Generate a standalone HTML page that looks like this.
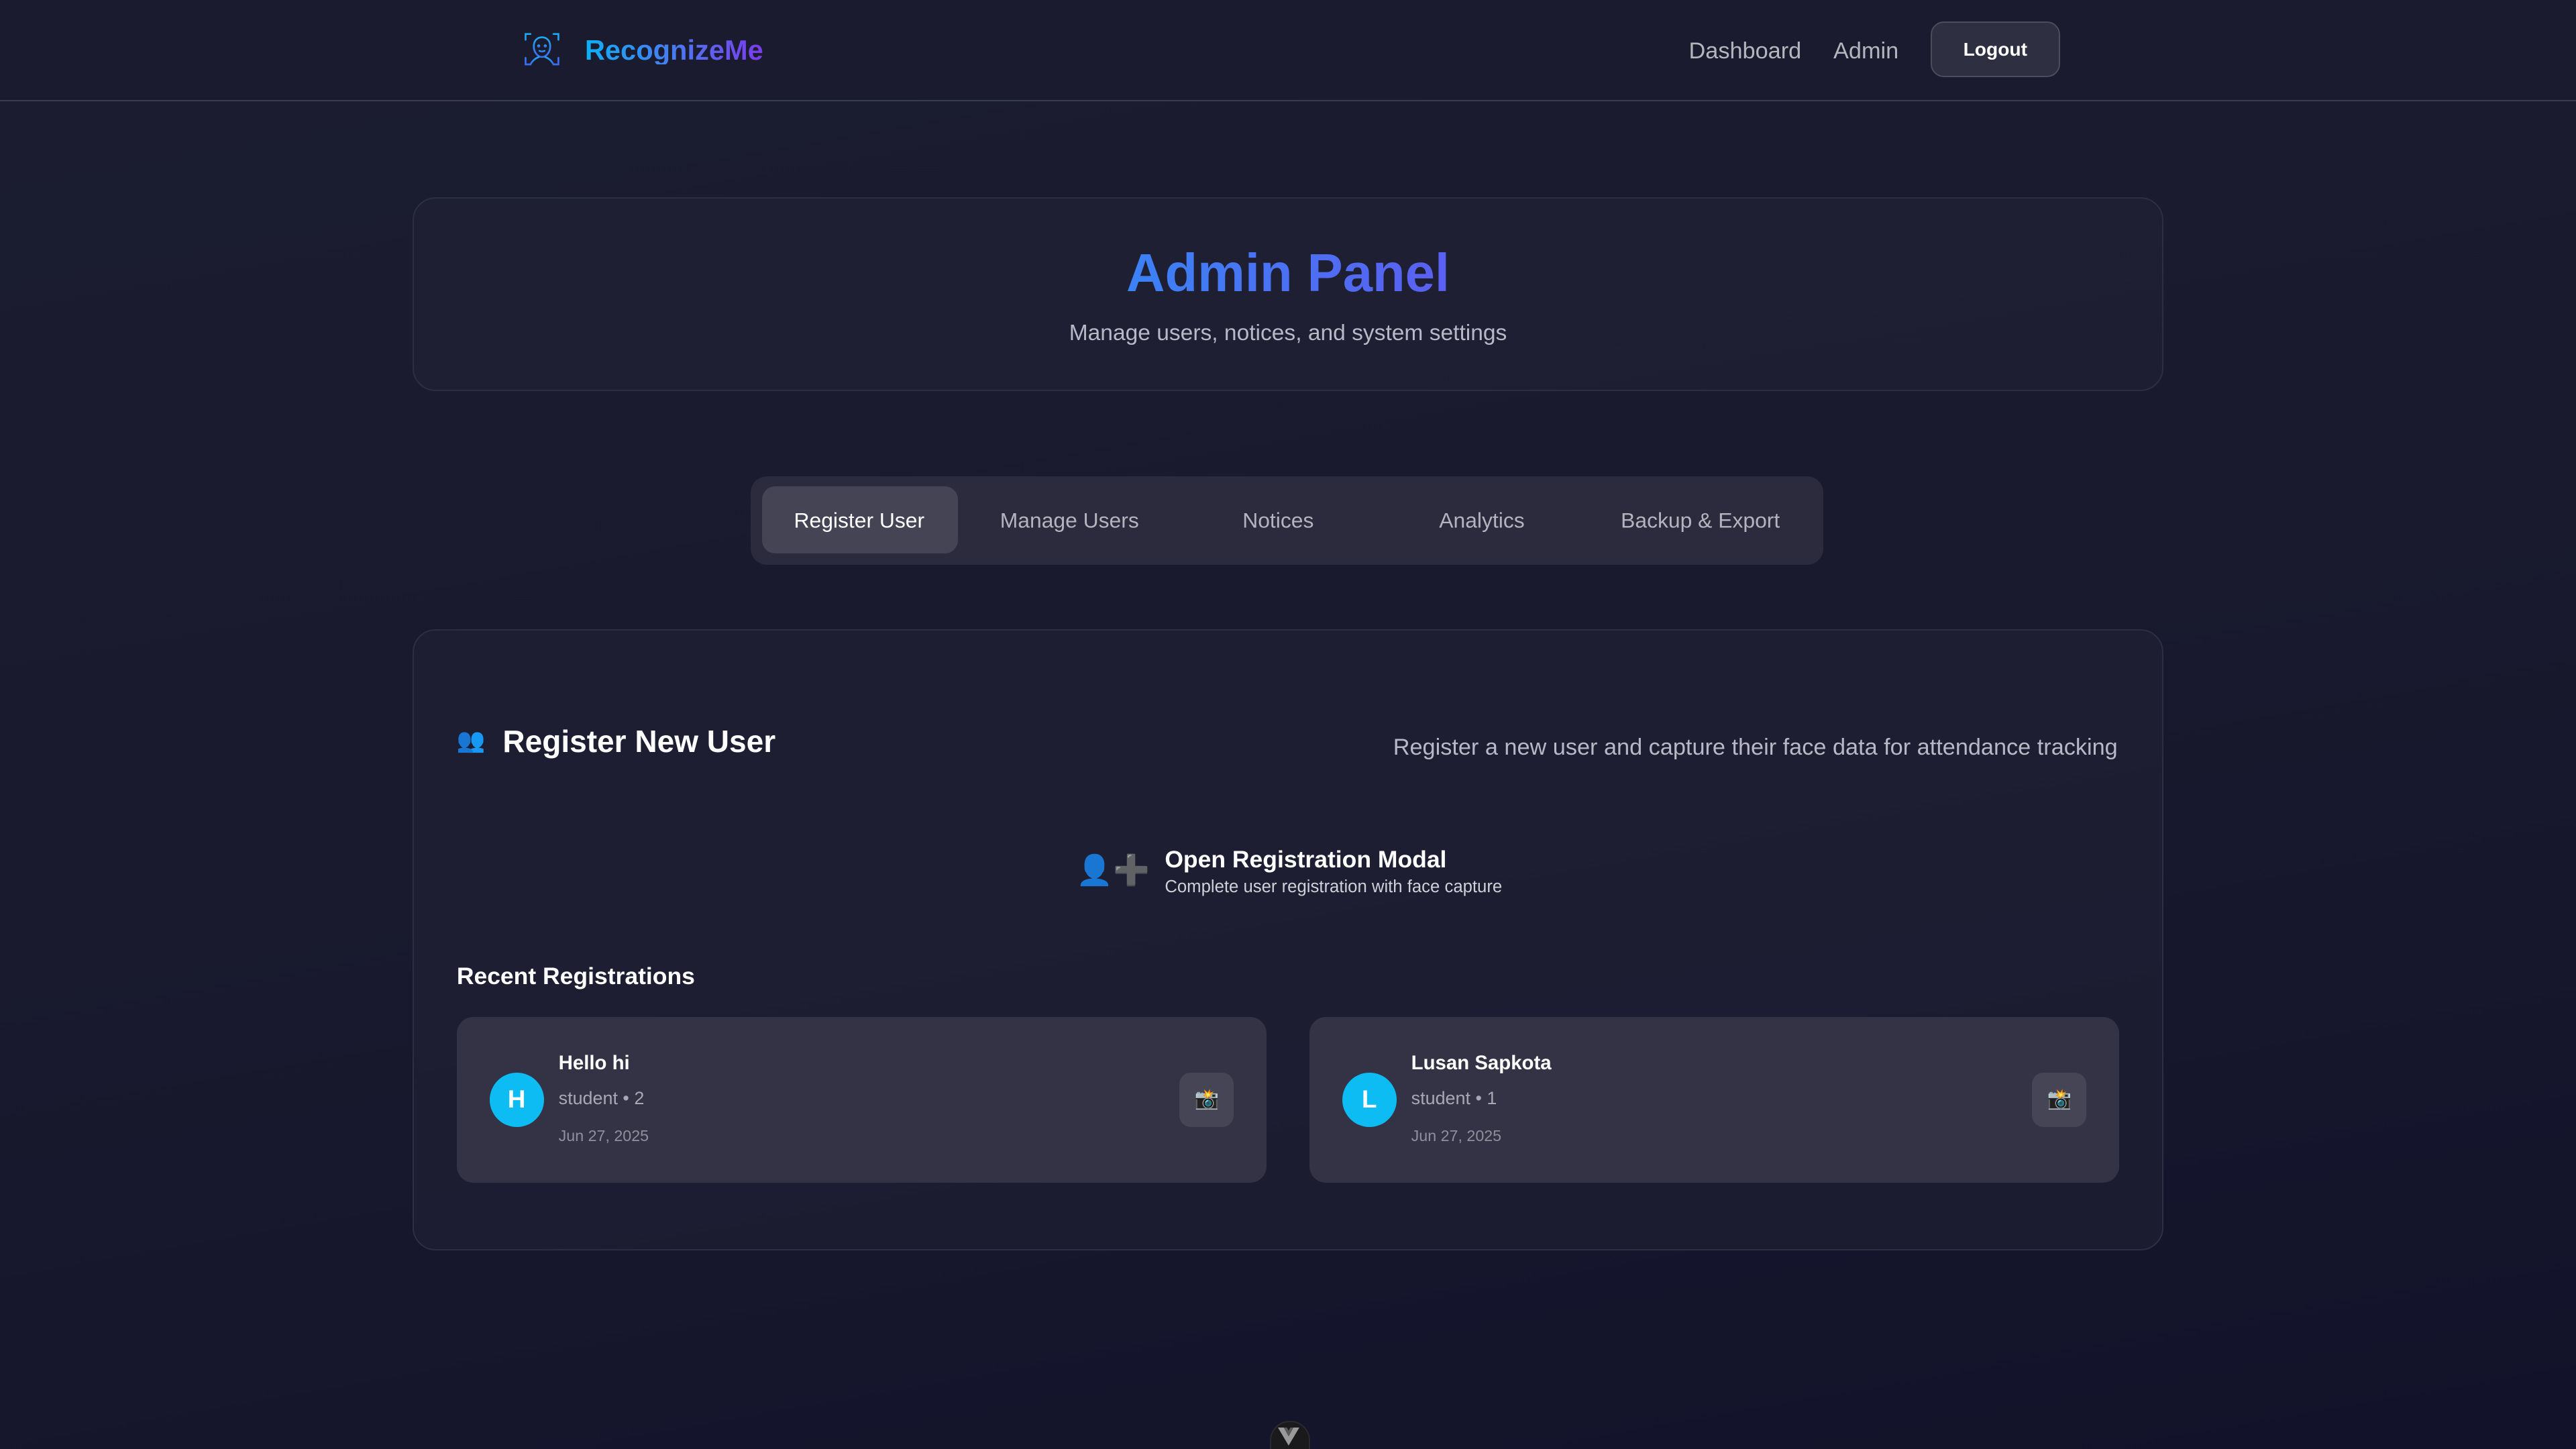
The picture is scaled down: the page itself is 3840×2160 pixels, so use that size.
<!DOCTYPE html>
<html><head><meta charset="utf-8"><style>
html,body{margin:0;padding:0;width:3840px;height:2160px;overflow:hidden;background:#161729}
#w{zoom:2.44898;width:1568px;height:882px;position:relative;background:linear-gradient(170deg,#1b1c30 0%,#191a2e 50%,#12122a 100%);font-family:"Liberation Sans","DejaVu Sans",sans-serif;color:#fff}
.a{position:absolute}
.c{position:absolute;line-height:1;white-space:nowrap}
.card{position:absolute;background:rgba(34,35,54,0.55);border:1px solid #2d2e44;border-radius:14px;box-sizing:border-box}
.rc{position:absolute;background:#333345;border-radius:10px;width:493px;height:101px;top:619px}
.av{position:absolute;left:20px;top:34px;width:33px;height:33px;border-radius:50%;background:#0ebcf4;font-size:15px;line-height:33px;text-align:center;font-weight:bold}
.cam{position:absolute;left:440px;top:34px;width:33px;height:33px;border-radius:7px;background:#454556;font-size:12px;line-height:33px;text-align:center}
.tab{position:absolute;top:317px;transform:translate(-50%,-50%);font-size:13px;color:#b4b4bf;white-space:nowrap}
</style></head><body><div id="w">
<div class="a" style="left:0;top:0;width:1568px;height:61px;background:#1a1b2e;border-bottom:1px solid #3a3b4e"></div>
<svg class="a" style="left:319px;top:19px" width="22" height="22" viewBox="0 0 22 22" fill="none" stroke-width="1.1" stroke-linecap="round">
<defs><linearGradient id="g" x1="0" y1="0" x2="0" y2="1"><stop offset="0" stop-color="#1ea8f0"/><stop offset="1" stop-color="#3b6cf0"/></linearGradient></defs>
<g stroke="url(#g)"><path d="M1 5V1.5h3M21 5V1.5h-3M1 16v4h3M21 16v4h-3"/><path d="M11 3.5c-3 0-5 2.2-5 5.5 0 3.5 2.3 6.5 5 6.5s5-3 5-6.5c0-3.3-2-5.5-5-5.5z"/><path d="M4 20c1-2 2.5-3.5 5-4.5M18 20c-1-2-2.5-3.5-5-4.5"/><circle cx="9" cy="8.8" r=".4"/><circle cx="13" cy="8.8" r=".4"/><path d="M9.5 11.8c1 .5 2 .5 3 0"/></g></svg>
<div class="c" style="left:356px;top:22px;font-size:17px;font-weight:bold;background:linear-gradient(90deg,#0db0f5,#4a7af0 50%,#7c3aed);-webkit-background-clip:text;background-clip:text;color:transparent">RecognizeMe</div>
<div class="c" style="left:1028px;top:24px;font-size:14px;color:#b5b5bd">Dashboard</div>
<div class="c" style="left:1116px;top:24px;font-size:14px;color:#b5b5bd">Admin</div>
<div class="a" style="left:1175px;top:13px;width:79px;height:34px;box-sizing:border-box;border:1px solid #4c4c5c;border-radius:8px;background:#2f2f42;font-size:11.5px;font-weight:bold;text-align:center;line-height:33px">Logout</div>

<div class="card" style="left:251px;top:120px;width:1066px;height:118px"></div>
<div class="c" style="left:0;width:1568px;text-align:center;top:150px;font-size:32.5px;font-weight:bold"><span style="background:linear-gradient(90deg,#3b82f6,#5b5ff0);-webkit-background-clip:text;background-clip:text;color:transparent">Admin Panel</span></div>
<div class="c" style="left:0;width:1568px;text-align:center;top:196px;font-size:13.7px;color:#b8b8c6">Manage users, notices, and system settings</div>

<div class="a" style="left:457px;top:290px;width:653px;height:54px;border-radius:10px;background:#2b2b3d"></div>
<div class="a" style="left:464px;top:296px;width:119px;height:41px;border-radius:8px;background:#444455"></div>
<div class="tab" style="left:523px;color:#fff">Register User</div>
<div class="tab" style="left:651px">Manage Users</div>
<div class="tab" style="left:778px">Notices</div>
<div class="tab" style="left:902px">Analytics</div>
<div class="tab" style="left:1035px">Backup &amp; Export</div>

<div class="card" style="left:251px;top:383px;width:1066px;height:378px"></div>
<div class="c" style="left:278px;top:444px;font-size:14px">👥</div>
<div class="c" style="left:306px;top:442px;font-size:18.8px;font-weight:600">Register New User</div>
<div class="c" style="right:279px;top:448px;font-size:14px;color:#b8b8c6">Register a new user and capture their face data for attendance tracking</div>
<div class="c" style="left:655px;top:521px;font-size:18px">👤➕</div>
<div class="c" style="left:709px;top:516px;font-size:14.5px;font-weight:bold">Open Registration Modal</div>
<div class="c" style="left:709px;top:535px;font-size:10.5px;color:#d0d0d8">Complete user registration with face capture</div>
<div class="c" style="left:278px;top:587px;font-size:14.5px;font-weight:bold">Recent Registrations</div>

<div class="rc" style="left:278px"><div class="av">H</div>
<div class="c" style="left:62px;top:22px;font-size:12px;font-weight:bold">Hello hi</div>
<div class="c" style="left:62px;top:44px;font-size:11px;color:#a8a8b4">student • 2</div>
<div class="c" style="left:62px;top:68px;font-size:9.5px;color:#8f8f9c">Jun 27, 2025</div>
<div class="cam">📸</div></div>
<div class="rc" style="left:797px"><div class="av">L</div>
<div class="c" style="left:62px;top:22px;font-size:12px;font-weight:bold">Lusan Sapkota</div>
<div class="c" style="left:62px;top:44px;font-size:11px;color:#a8a8b4">student • 1</div>
<div class="c" style="left:62px;top:68px;font-size:9.5px;color:#8f8f9c">Jun 27, 2025</div>
<div class="cam">📸</div></div>

<div class="a" style="left:773px;top:865px;width:23px;height:30px;border-radius:12px;background:#1a1a1c;border:1px solid #2a2a2e"></div>
<svg class="a" style="left:778px;top:869px" width="13" height="11" viewBox="0 0 13 11"><path d="M0 0h4l2.5 4.5L9 0h4L6.5 11z" fill="#9a9a9a"/><path d="M3.5 0h2l1 2 1-2h2L6.5 5.5z" fill="#5a5a5a"/></svg>
</div></body></html>
